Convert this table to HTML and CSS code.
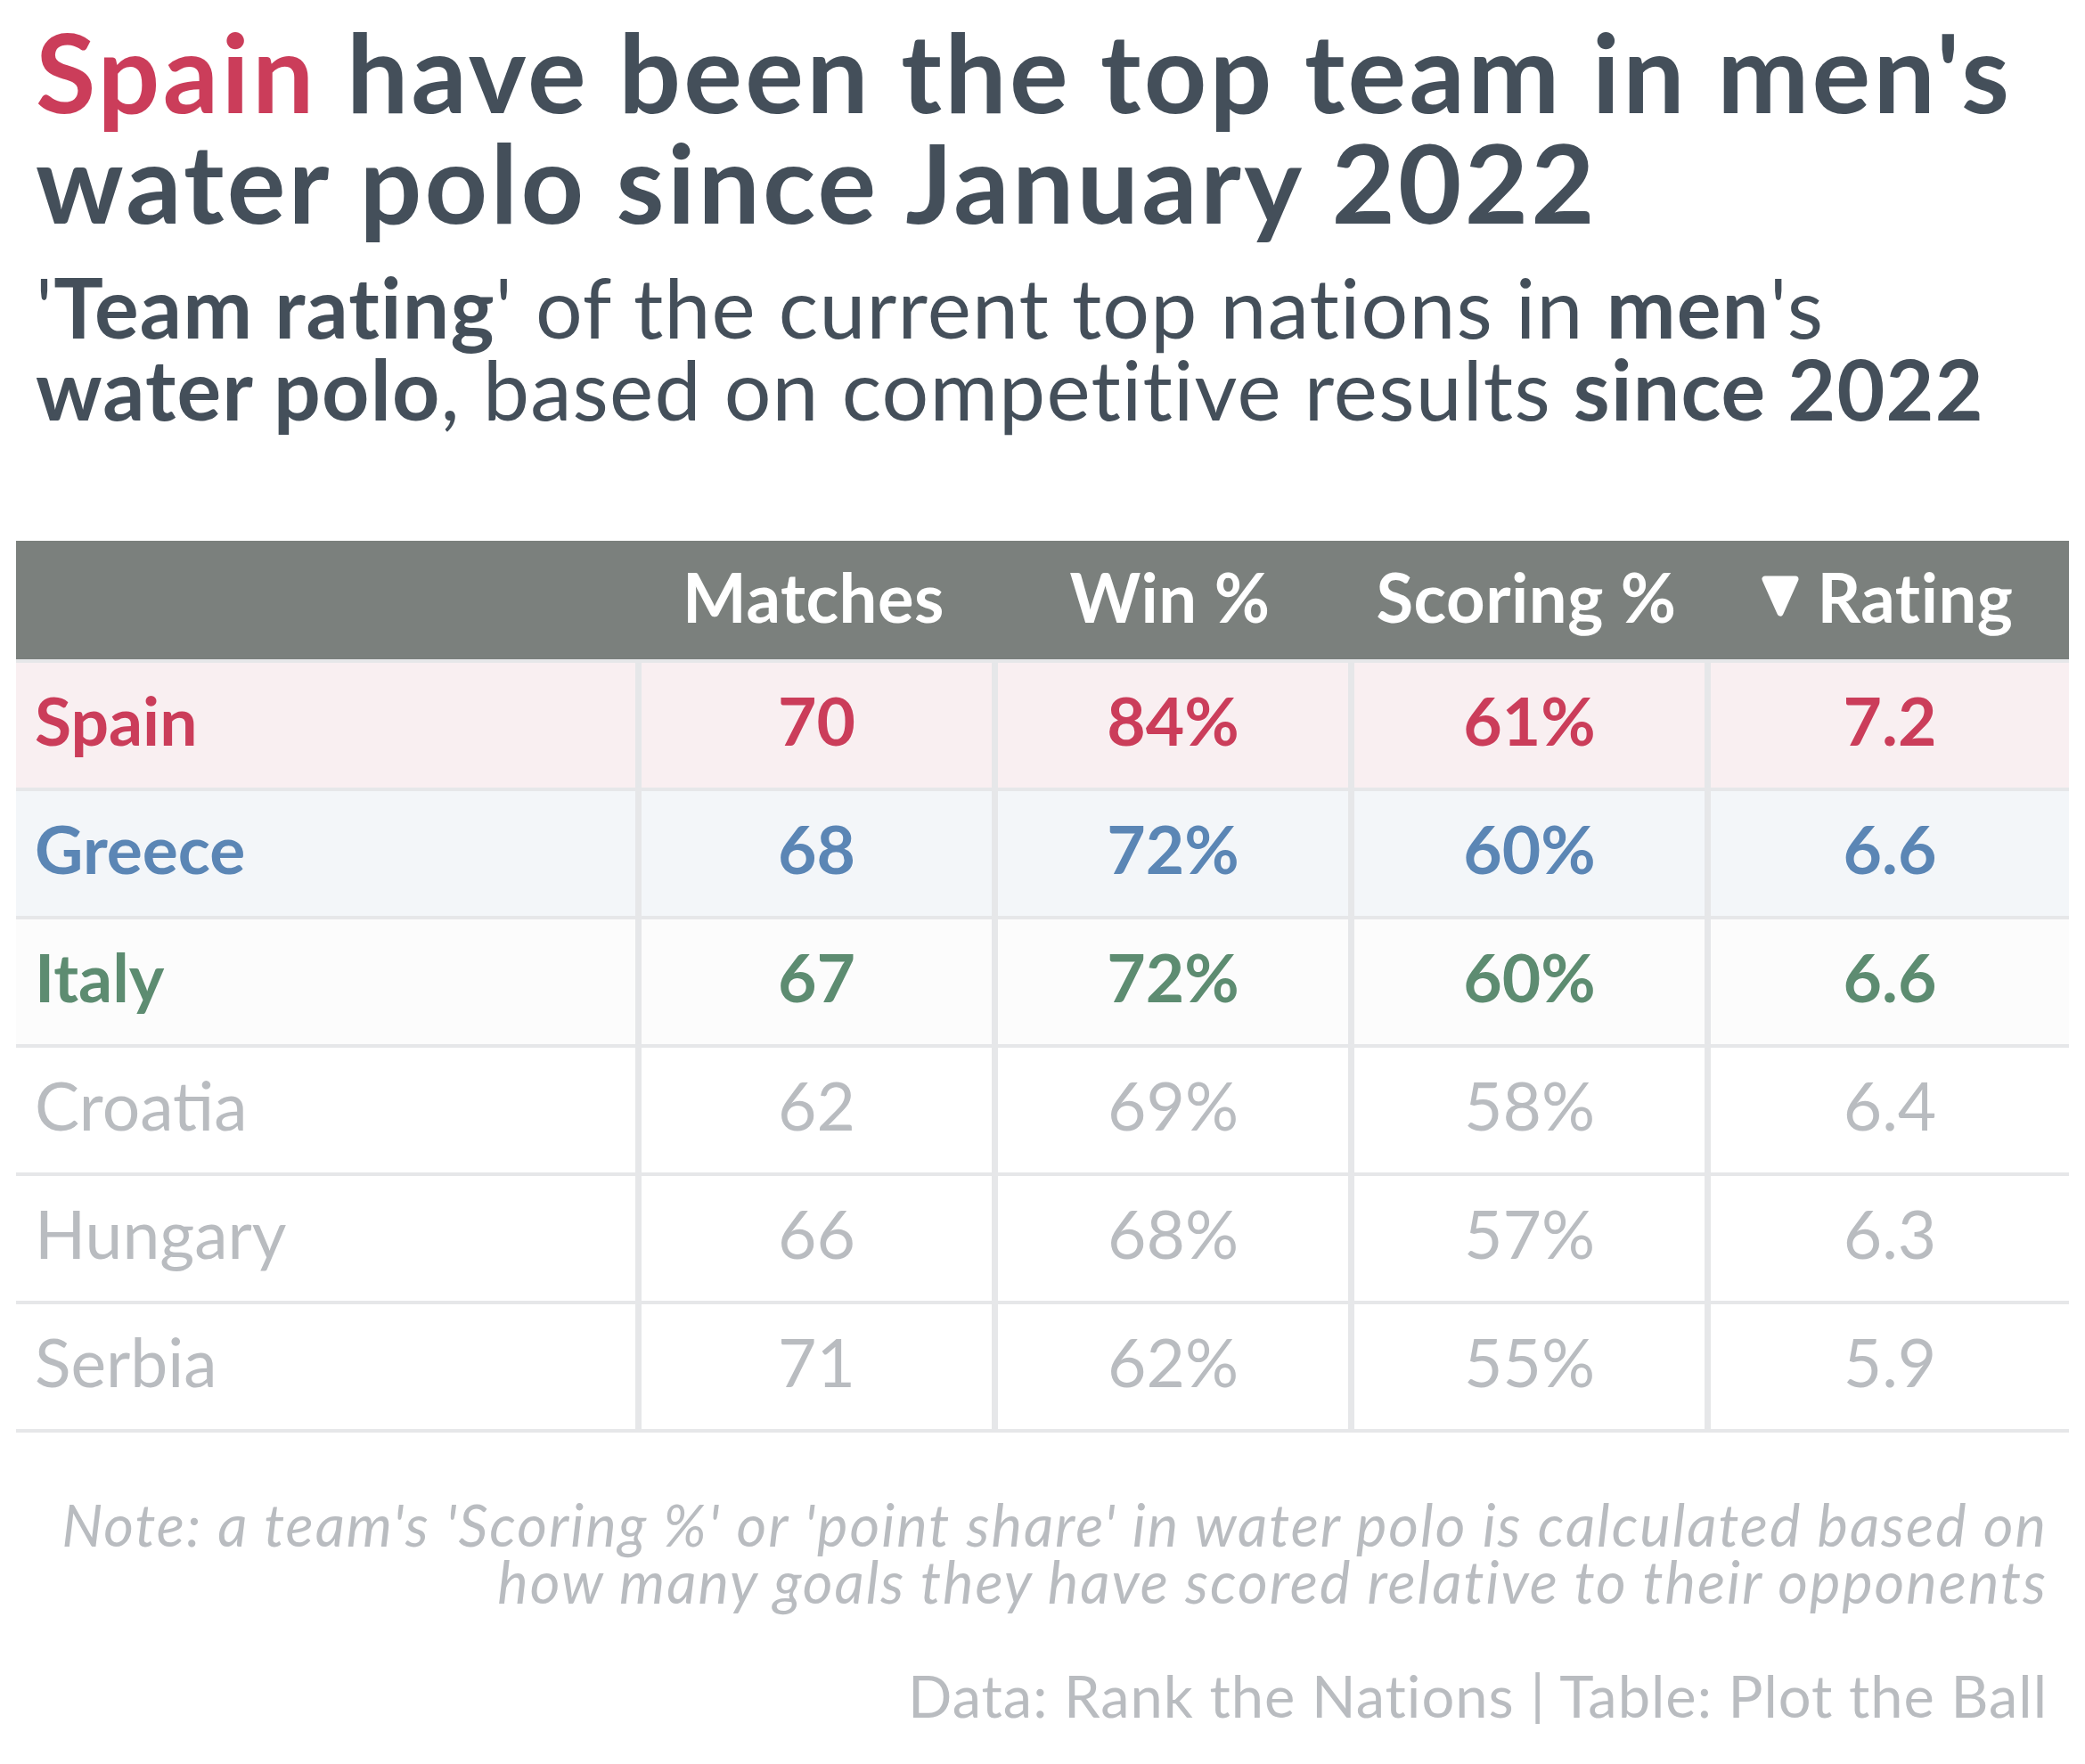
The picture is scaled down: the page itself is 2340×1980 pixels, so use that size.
FILE: index.html
```html
<!DOCTYPE html>
<html lang="en">
<head>
<meta charset="utf-8">
<title>Water polo team ratings</title>
<link rel="stylesheet" href="styles.css">
</head>
<body>
<main class="page">
  <header class="heading">
    <h1 class="title"><span class="spain">Spain</span> have been the top team in men's<br>water polo since January 2022</h1>
    <p class="subtitle">'<b>Team rating</b>' of the current top nations in <b>men</b>'s<br><b>water polo</b>, based on competitive results <b>since 2022</b></p>
  </header>

  <div class="table">
    <div class="row head">
      <div class="cell name"></div>
      <div class="cell">Matches</div>
      <div class="cell">Win %</div>
      <div class="cell">Scoring %</div>
      <div class="cell"><svg class="tri" viewBox="0 0 44 46" width="44" height="46"><path d="M5 4 H39 L22 42 Z" fill="#fff" stroke="#fff" stroke-width="7" stroke-linejoin="round"/></svg> Rating</div>
    </div>
    <div class="row r-spain">
      <div class="cell name">Spain</div>
      <div class="cell">70</div>
      <div class="cell">84%</div>
      <div class="cell">61%</div>
      <div class="cell">7.2</div>
    </div>
    <div class="row r-greece">
      <div class="cell name">Greece</div>
      <div class="cell">68</div>
      <div class="cell">72%</div>
      <div class="cell">60%</div>
      <div class="cell">6.6</div>
    </div>
    <div class="row r-italy">
      <div class="cell name">Italy</div>
      <div class="cell">67</div>
      <div class="cell">72%</div>
      <div class="cell">60%</div>
      <div class="cell">6.6</div>
    </div>
    <div class="row r-other">
      <div class="cell name">Croatia</div>
      <div class="cell">62</div>
      <div class="cell">69%</div>
      <div class="cell">58%</div>
      <div class="cell">6.4</div>
    </div>
    <div class="row r-other">
      <div class="cell name">Hungary</div>
      <div class="cell">66</div>
      <div class="cell">68%</div>
      <div class="cell">57%</div>
      <div class="cell">6.3</div>
    </div>
    <div class="row r-other">
      <div class="cell name">Serbia</div>
      <div class="cell">71</div>
      <div class="cell">62%</div>
      <div class="cell">55%</div>
      <div class="cell">5.9</div>
    </div>
  </div>

  <footer class="notes">
    <p class="note">Note: a team's 'Scoring %' or 'point share' in water polo is calculated based on<br>how many goals they have scored relative to their opponents</p>
    <p class="source">Data: Rank the Nations | Table: Plot the Ball</p>
  </footer>
</main>
</body>
</html>
```

FILE: styles.css
```css
* { box-sizing: border-box; }

html, body {
  margin: 0;
  padding: 0;
  background: #ffffff;
}

body {
  font-family: "Lato", "Open Sans", sans-serif;
  color: #444f5a;
}

.page {
  width: 2340px;
  padding: 18px 18px 0 18px;
}

.heading {
  padding-left: 22px;
}

.title {
  margin: 0;
  font-size: 123px;
  line-height: 124px;
  font-weight: 700;
  letter-spacing: 3.3px;
  color: #444f5a;
}

.spain { color: #cb3d5a; }

.subtitle {
  margin: 32px 0 0 0;
  font-size: 93px;
  line-height: 92px;
  font-weight: 400;
  letter-spacing: 1.2px;
  color: #444f5a;
}

.subtitle b { font-weight: 700; }

.table {
  margin-top: 125px;
  width: 2304px;
}

.row {
  display: grid;
  grid-template-columns: 695px 400px 400px 400px 1fr;
  border-bottom: 4px solid #e6e7e9;
}

.row .cell {
  height: 140px;
  padding-bottom: 12px;
  display: flex;
  align-items: center;
  justify-content: center;
  font-size: 75px;
  line-height: 1;
}

.row:not(.head) .cell + .cell {
  border-left: 7px solid #e6e7e9;
}

.row .cell.name {
  justify-content: flex-start;
  padding-left: 21px;
}

.head {
  background: #7b807d;
}

.head .cell {
  height: 133px;
  padding-bottom: 8px;
  color: #ffffff;
  font-weight: 700;
  font-size: 76px;
  letter-spacing: 0.5px;
  gap: 20px;
}

.tri {
  display: block;
  margin-top: -2px;
}

.r-spain { background: #f9eff1; color: #cb3d5a; font-weight: 700; }
.r-greece { background: #f3f6f9; color: #5b86b5; font-weight: 700; }
.r-italy { background: #fcfcfc; color: #5d8c71; font-weight: 700; }
.r-other { background: #ffffff; color: #b9bcc0; font-weight: 400; }

.notes {
  padding-right: 24px;
  text-align: right;
  color: #b9bcc0;
}

.note {
  margin: 71px 0 0 0;
  font-size: 65px;
  line-height: 64px;
  font-style: italic;
  font-weight: 400;
  letter-spacing: 2px;
}

.source {
  margin: 64px 0 0 0;
  font-size: 65px;
  line-height: 64px;
  font-weight: 400;
  letter-spacing: 1px;
}
```
